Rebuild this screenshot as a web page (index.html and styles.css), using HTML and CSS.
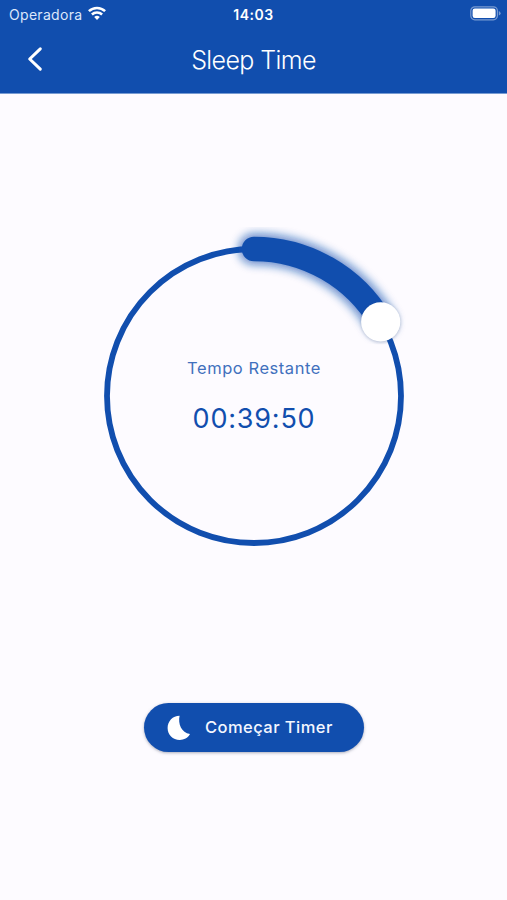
FILE: index.html
```html
<!DOCTYPE html>
<html lang="pt">
<head>
<meta charset="utf-8">
<title>Sleep Time</title>
<link rel="stylesheet" href="styles.css">
</head>
<body>
<div class="screen">
  <header class="header">
    <div class="status">
      <div class="carrier"><span class="operator">Operadora</span>
        <svg class="wifi" width="18" height="14" viewBox="0 0 18 14" fill="none" stroke="#fff" stroke-width="2.5"><path d="M.9 5.2a11.6 11.6 0 0 1 16.2 0M3.9 8.5a7.3 7.3 0 0 1 10.2 0"/><path d="M9 13.9 6.2 11.1a4 4 0 0 1 5.6 0Z" fill="#fff" stroke="none"/></svg>
      </div>
      <time class="clock">14:03</time>
      <svg class="battery" width="31" height="15" viewBox="0 0 31 15"><rect x=".8" y=".8" width="26.6" height="13" rx="4" fill="none" stroke="#799bd1" stroke-width="1.2"/><rect x="2.6" y="2.6" width="23" height="9.4" rx="2.2" fill="#fff"/><path d="M28.8 5q1.8.7 1.8 2.3t-1.8 2.3Z" fill="#799bd1"/></svg>
    </div>
    <nav class="nav">
      <svg class="back" width="16" height="26" viewBox="0 0 16 26" fill="none" stroke="#fff" stroke-width="3" stroke-linecap="round" stroke-linejoin="round"><path d="M13.3 2.8 2.7 13 13.3 23.2"/></svg>
      <h1 class="title">Sleep Time</h1>
    </nav>
  </header>
  <main class="main">
    <div class="dial">
      <svg class="ring" viewBox="0 0 340 340">
        <defs>
          <filter id="glow" x="-30%" y="-30%" width="160%" height="160%"><feGaussianBlur stdDeviation="5"/></filter>
          <filter id="soft" x="-30%" y="-30%" width="160%" height="160%"><feGaussianBlur stdDeviation="1.7"/></filter>
        </defs>
        <g fill="none" stroke="#114eae">
          <circle cx="170" cy="170" r="147" stroke-width="5.8"/>
          <path d="M170 23A147 147 0 0 1 296.9 95.8" stroke-width="31" stroke-linecap="round" opacity=".65" filter="url(#glow)"/>
          <path d="M170 23A147 147 0 0 1 296.9 95.8" stroke-width="24.5" stroke-linecap="round"/>
        </g>
        <circle cx="296.8" cy="96.4" r="20" fill="#30436c" opacity=".22" filter="url(#soft)"/>
        <circle cx="296.7" cy="95.8" r="19.6" fill="#fff"/>
      </svg>
      <div class="readout">
        <span class="label">Tempo Restante</span>
        <span class="remaining">00:39:50</span>
      </div>
    </div>
    <button class="start" type="button">
      <svg class="moon" width="24" height="26" viewBox="0 0 24 26" fill="#fff"><path d="M12.6.8C10.8 8.6 14.4 18 23 19.1 20.7 23.2 17 25 12.8 25 5.8 25 .6 19.7.6 13 .6 6.2 5.7.9 12.6.8Z"/></svg>
      <span class="caption">Começar Timer</span>
    </button>
  </main>
</div>
</body>
</html>
```

FILE: styles.css
```css
* { box-sizing: border-box; }
body { margin: 0; font-family: Inter, "Liberation Sans", sans-serif; }
.screen { width: 507px; height: 900px; background: #fdfbff; display: flex; flex-direction: column; overflow: hidden; }
.header { height: 94px; background: #114eae; color: #fff; border-bottom: 1px solid #779bd2; flex: none; }
.status { height: 28px; display: grid; grid-template-columns: 1fr auto 1fr; align-items: center; padding: 0 6px 0 9px; }
.carrier { display: flex; align-items: center; gap: 6px; }
.operator { font-size: 14px; letter-spacing: .3px; color: #dce7fb; }
.wifi { margin-top: -2px; }
.clock { font-size: 14px; font-weight: 600; letter-spacing: .5px; margin-left: -3px; }
.battery { justify-self: end; margin-top: -2px; }
.nav { height: 65px; display: grid; grid-template-columns: 80px 1fr 80px; align-items: center; }
.back { margin-left: 27px; margin-top: -4px; }
.title { margin: -2px 0 0; text-align: center; font-size: 25px; font-weight: 350; letter-spacing: -.6px; }
.main { flex: 1; display: flex; flex-direction: column; align-items: center; }
.dial { width: 340px; height: 340px; margin-top: 132px; margin-left: 1px; display: grid; }
.ring { width: 340px; height: 340px; grid-area: 1 / 1; overflow: visible; }
.readout { grid-area: 1 / 1; display: flex; flex-direction: column; align-items: center; padding-top: 130px; color: #114eae; }
.label { font-size: 16.5px; line-height: 24px; letter-spacing: .55px; color: #4170bd; }
.remaining { font-size: 27px; line-height: 36px; margin-top: 21px; letter-spacing: .8px; }
.start { width: 220px; height: 49px; margin-top: 137px; margin-left: 1px; padding: 0 0 0 24px; border: 0; border-radius: 25px; background: #114eae; color: #f4f7ff; display: flex; align-items: center; gap: 13px; font: 500 16.5px Inter, "Liberation Sans", sans-serif; box-shadow: 0 1px 3px #59617a80; }
.moon { margin-left: -1px; }
.caption { letter-spacing: .45px; white-space: nowrap; margin-left: 1px; margin-top: -1px; }
```
